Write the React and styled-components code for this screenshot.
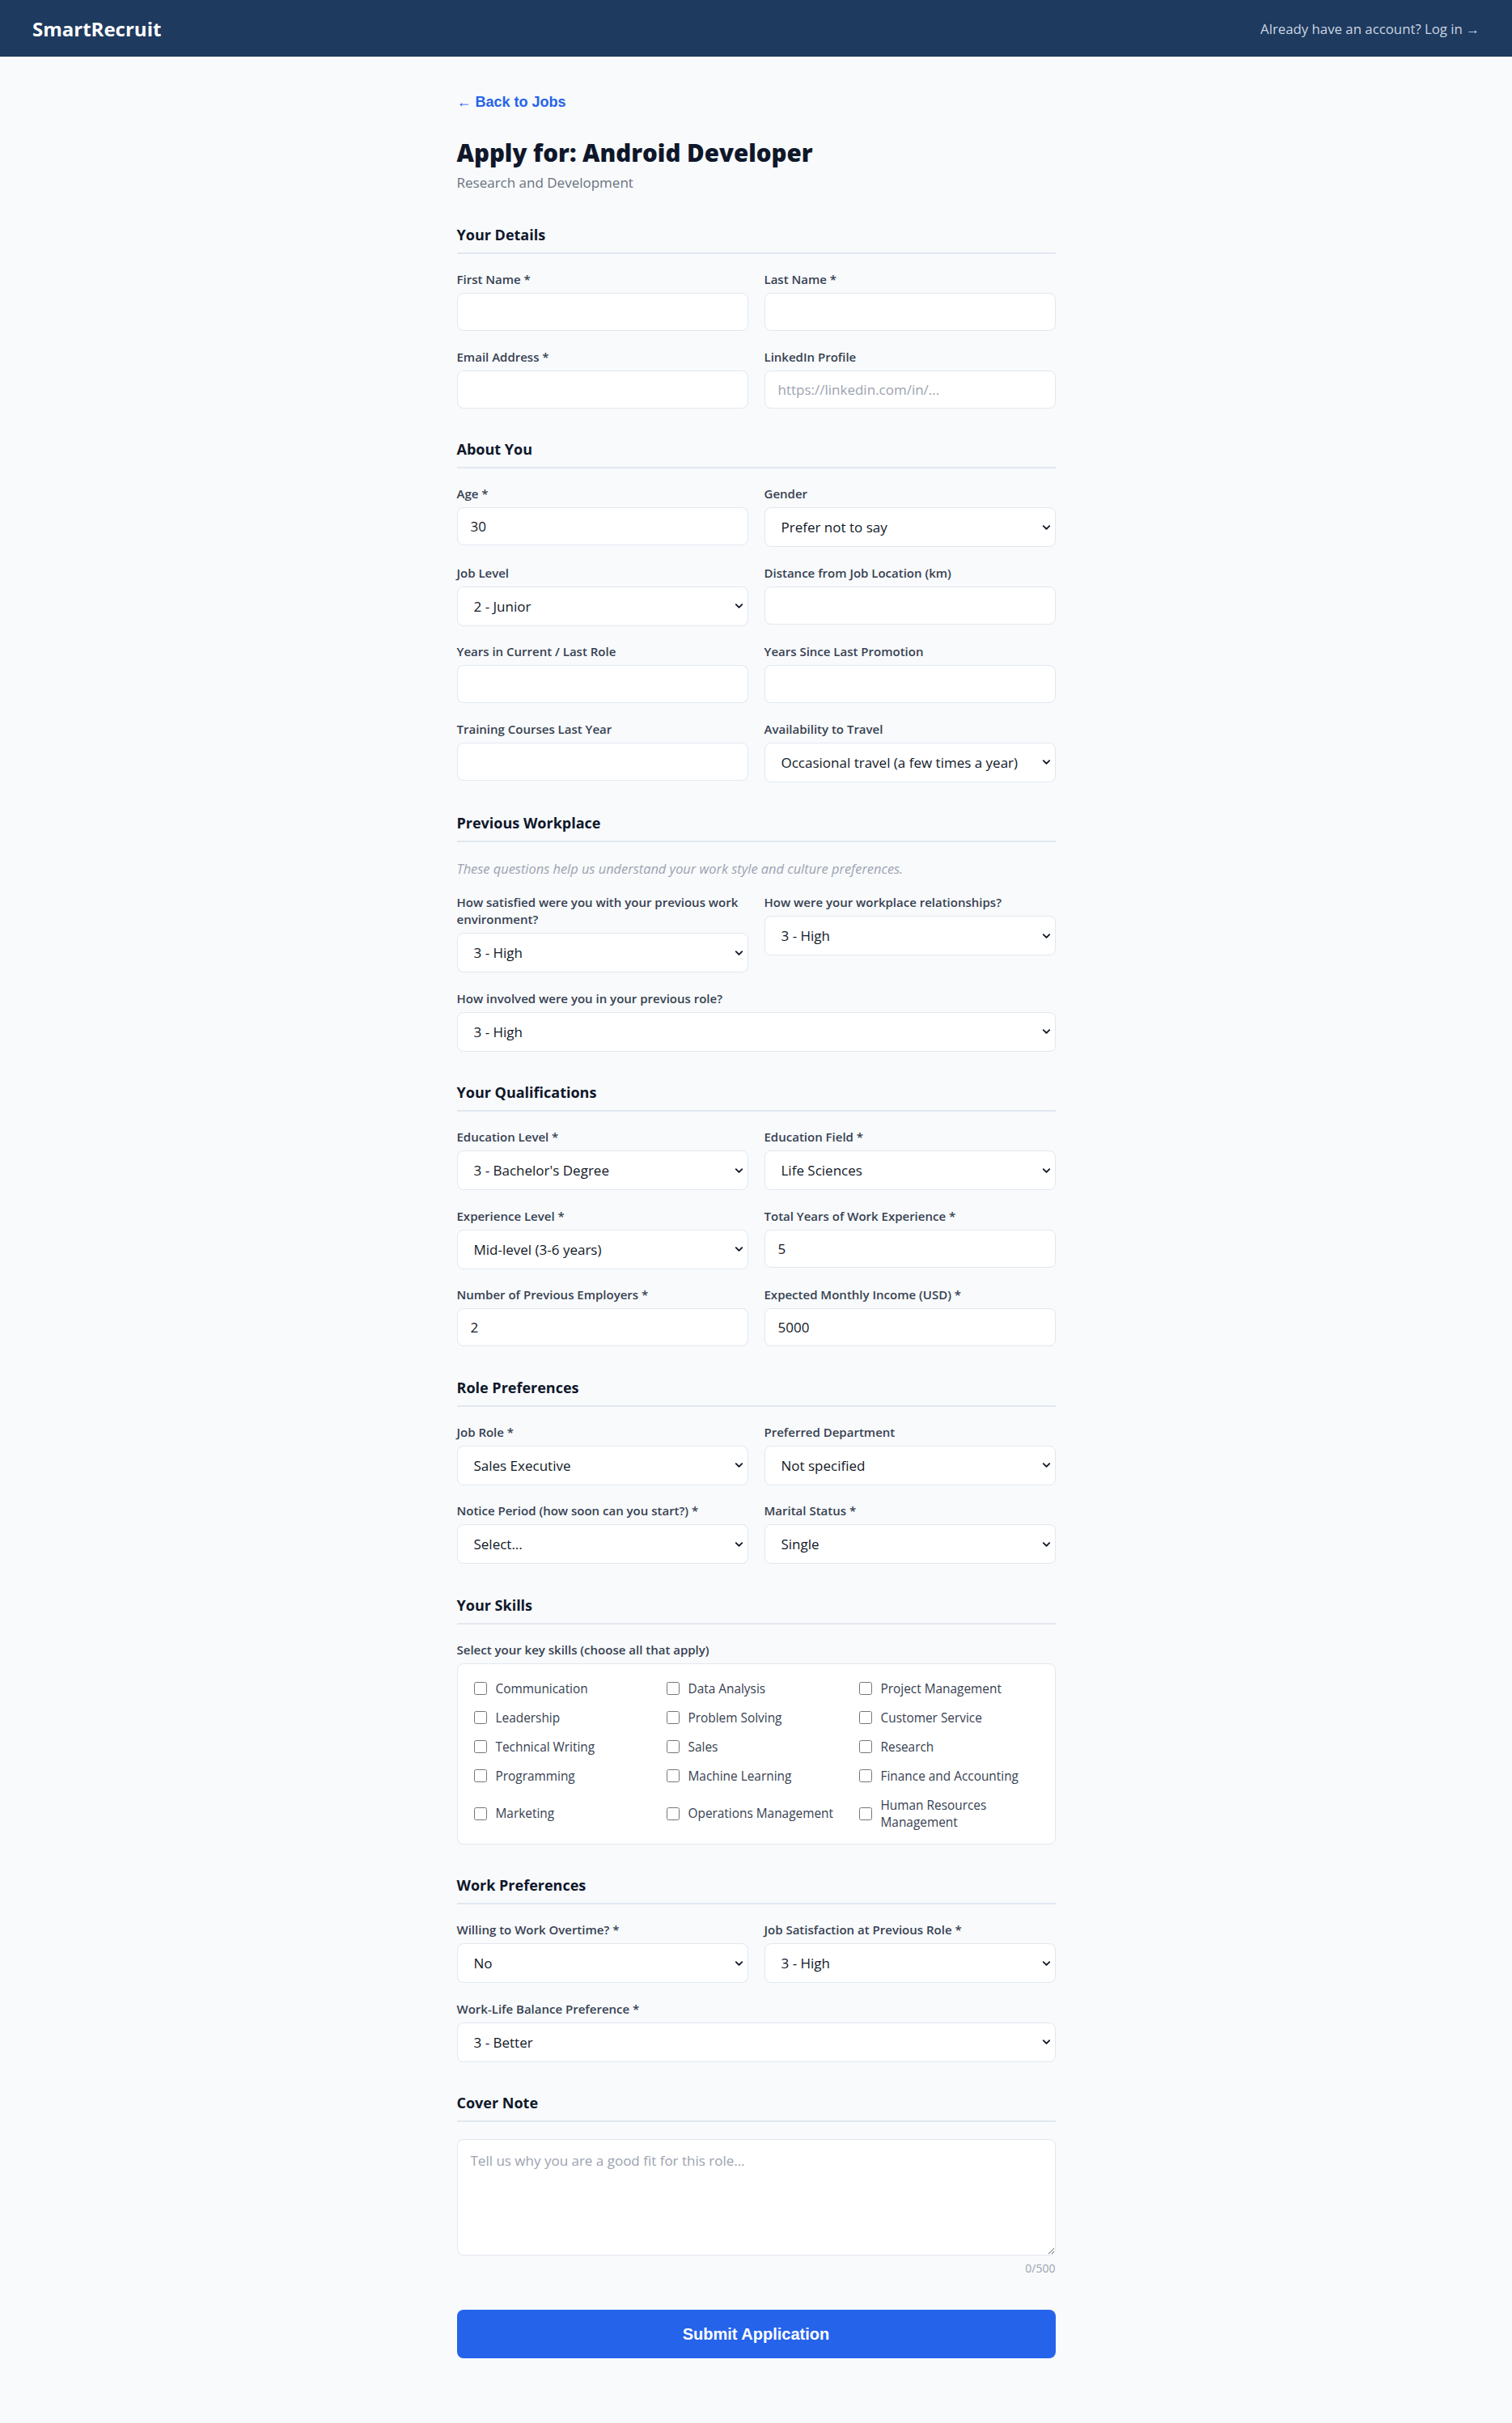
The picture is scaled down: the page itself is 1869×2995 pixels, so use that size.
import React from "react";
import styled, { createGlobalStyle } from "styled-components";
import { ChevronDown } from "lucide-react";

const GlobalStyle = createGlobalStyle`
  * { box-sizing: border-box; }
  body {
    margin: 0;
    background: #f8fafc;
    font-family: "Open Sans", "Noto Sans", sans-serif;
    color: #111827;
  }
`;

const skills = [
  "Communication", "Data Analysis", "Project Management",
  "Leadership", "Problem Solving", "Customer Service",
  "Technical Writing", "Sales", "Research",
  "Programming", "Machine Learning", "Finance and Accounting",
  "Marketing", "Operations Management", "Human Resources Management",
];

const Field = ({ label, value, placeholder, select, full }) => (
  <FieldBox full={full}>
    <Label>{label}</Label>
    {select ? (
      <SelectWrap>
        <Select defaultValue={value}>
          <option value={value}>{value}</option>
        </Select>
        <Chevron>
          <ChevronDown size={15} strokeWidth={3} />
        </Chevron>
      </SelectWrap>
    ) : (
      <Input defaultValue={value} placeholder={placeholder} />
    )}
  </FieldBox>
);

const App = () => {
  return (
    <>
      <GlobalStyle />
      <Header>
        <Logo>SmartRecruit</Logo>
        <LoginLink href="#">Already have an account? Log in →</LoginLink>
      </Header>

      <Main>
        <BackLink href="#">← Back to Jobs</BackLink>
        <Title>Apply for: Android Developer</Title>
        <Subtitle>Research and Development</Subtitle>

        <Section>
          <SectionTitle>Your Details</SectionTitle>
          <Grid>
            <Field label="First Name *" />
            <Field label="Last Name *" />
            <Field label="Email Address *" />
            <Field label="LinkedIn Profile" placeholder="https://linkedin.com/in/..." />
          </Grid>
        </Section>

        <Section>
          <SectionTitle>About You</SectionTitle>
          <Grid>
            <Field label="Age *" value="30" />
            <Field label="Gender" value="Prefer not to say" select />
            <Field label="Job Level" value="2 - Junior" select />
            <Field label="Distance from Job Location (km)" />
            <Field label="Years in Current / Last Role" />
            <Field label="Years Since Last Promotion" />
            <Field label="Training Courses Last Year" />
            <Field label="Availability to Travel" value="Occasional travel (a few times a year)" select />
          </Grid>
        </Section>

        <Section>
          <SectionTitle>Previous Workplace</SectionTitle>
          <Note>These questions help us understand your work style and culture preferences.</Note>
          <Grid>
            <Field label="How satisfied were you with your previous work environment?" value="3 - High" select />
            <Field label="How were your workplace relationships?" value="3 - High" select />
            <Field label="How involved were you in your previous role?" value="3 - High" select full />
          </Grid>
        </Section>

        <Section>
          <SectionTitle>Your Qualifications</SectionTitle>
          <Grid>
            <Field label="Education Level *" value="3 - Bachelor's Degree" select />
            <Field label="Education Field *" value="Life Sciences" select />
            <Field label="Experience Level *" value="Mid-level (3-6 years)" select />
            <Field label="Total Years of Work Experience *" value="5" />
            <Field label="Number of Previous Employers *" value="2" />
            <Field label="Expected Monthly Income (USD) *" value="5000" />
          </Grid>
        </Section>

        <Section>
          <SectionTitle>Role Preferences</SectionTitle>
          <Grid>
            <Field label="Job Role *" value="Sales Executive" select />
            <Field label="Preferred Department" value="Not specified" select />
            <Field label="Notice Period (how soon can you start?) *" value="Select..." select />
            <Field label="Marital Status *" value="Single" select />
          </Grid>
        </Section>

        <Section>
          <SectionTitle>Your Skills</SectionTitle>
          <Label>Select your key skills (choose all that apply)</Label>
          <SkillsBox>
            {skills.map((skill) => (
              <Skill key={skill}>
                <input type="checkbox" />
                <span>{skill}</span>
              </Skill>
            ))}
          </SkillsBox>
        </Section>

        <Section>
          <SectionTitle>Work Preferences</SectionTitle>
          <Grid>
            <Field label="Willing to Work Overtime? *" value="No" select />
            <Field label="Job Satisfaction at Previous Role *" value="3 - High" select />
            <Field label="Work-Life Balance Preference *" value="3 - Better" select full />
          </Grid>
        </Section>

        <Section>
          <SectionTitle>Cover Note</SectionTitle>
          <TextArea placeholder="Tell us why you are a good fit for this role..." />
          <Counter>0/500</Counter>
        </Section>

        <SubmitButton type="button">Submit Application</SubmitButton>
      </Main>
    </>
  );
};

export default App;

const Header = styled.header`
  height: 70px;
  background: #1e3a5f;
  display: flex;
  align-items: center;
  justify-content: space-between;
  padding: 0 40px;
`;

const Logo = styled.div`
  color: #ffffff;
  font-size: 24px;
  font-weight: 700;
`;

const LoginLink = styled.a`
  color: #cbd5e1;
  font-size: 16.8px;
  text-decoration: none;
`;

const Main = styled.main`
  width: 740px;
  margin: 0 auto;
  padding: 44px 0 80px;
`;

const BackLink = styled.a`
  display: block;
  color: #2563eb;
  font-family: "Liberation Sans", Arial, sans-serif;
  font-weight: 700;
  font-size: 18px;
  line-height: 24px;
  text-decoration: none;
`;

const Title = styled.h1`
  margin: 33px 0 5px;
  font-size: 29.5px;
  line-height: 36px;
  font-weight: 800;
  color: #0f172a;
`;

const Subtitle = styled.p`
  margin: 0 0 38px;
  font-size: 17px;
  line-height: 27px;
  color: #6b7280;
`;

const Section = styled.section`
  margin-bottom: 37.5px;
`;

const SectionTitle = styled.h2`
  margin: 0 0 21px;
  padding-bottom: 8px;
  border-bottom: 2px solid #e2e8f0;
  font-size: 18px;
  line-height: 27px;
  font-weight: 700;
  color: #0f172a;
`;

const Note = styled.p`
  margin: 0 0 19px;
  font-size: 16.4px;
  line-height: 24px;
  font-style: italic;
  color: #9ca3af;
`;

const Grid = styled.div`
  display: grid;
  grid-template-columns: 1fr 1fr;
  column-gap: 20px;
  row-gap: 21.5px;
  align-items: start;
`;

const FieldBox = styled.div`
  display: flex;
  flex-direction: column;
  grid-column: ${(p) => (p.full ? "1 / -1" : "auto")};
`;

const Label = styled.label`
  display: block;
  margin-bottom: 6px;
  font-size: 15px;
  line-height: 21px;
  font-weight: 600;
  color: #374151;
`;

const Input = styled.input`
  height: 47px;
  width: 100%;
  padding: 0 16px;
  border: 1.5px solid #e2e8f0;
  border-radius: 8px;
  background: #ffffff;
  font-family: inherit;
  font-size: 17px;
  color: #111827;
  outline: none;
  &::placeholder {
    color: #9ca3af;
  }
`;

const SelectWrap = styled.div`
  position: relative;
`;

const Select = styled.select`
  appearance: none;
  height: 49px;
  width: 100%;
  padding: 0 30px 0 20px;
  border: 1.5px solid #e2e8f0;
  border-radius: 8px;
  background: #ffffff;
  font-family: inherit;
  font-size: 17px;
  color: #111827;
  outline: none;
`;

const Chevron = styled.span`
  position: absolute;
  right: 4px;
  top: 50%;
  transform: translateY(-50%);
  display: flex;
  color: #111827;
  pointer-events: none;
`;

const SkillsBox = styled.div`
  display: grid;
  grid-template-columns: repeat(3, 1fr);
  column-gap: 16px;
  row-gap: 15px;
  align-items: center;
  padding: 20px 20px 16px;
  background: #ffffff;
  border: 1.5px solid #e2e8f0;
  border-radius: 8px;
  margin-top: 4px;
`;

const Skill = styled.label`
  display: flex;
  align-items: center;
  gap: 11px;
  font-size: 15.4px;
  line-height: 21px;
  font-weight: 500;
  color: #374151;
  input {
    width: 16px;
    height: 16px;
    margin: 0;
    flex-shrink: 0;
  }
`;

const TextArea = styled.textarea`
  display: block;
  width: 100%;
  height: 144px;
  padding: 14px 16px;
  border: 1.5px solid #e2e8f0;
  border-radius: 8px;
  background: #ffffff;
  font-family: inherit;
  font-size: 17px;
  line-height: 24px;
  resize: vertical;
  outline: none;
  &::placeholder {
    color: #9ca3af;
  }
`;

const Counter = styled.div`
  margin-top: 6px;
  text-align: right;
  font-size: 14px;
  color: #9ca3af;
`;

const SubmitButton = styled.button`
  display: block;
  width: 100%;
  height: 60px;
  margin-top: 42px;
  border: none;
  border-radius: 8px;
  background: #2563eb;
  color: #ffffff;
  font-family: "Liberation Sans", Arial, sans-serif;
  font-size: 20px;
  font-weight: 700;
  cursor: pointer;
`;
